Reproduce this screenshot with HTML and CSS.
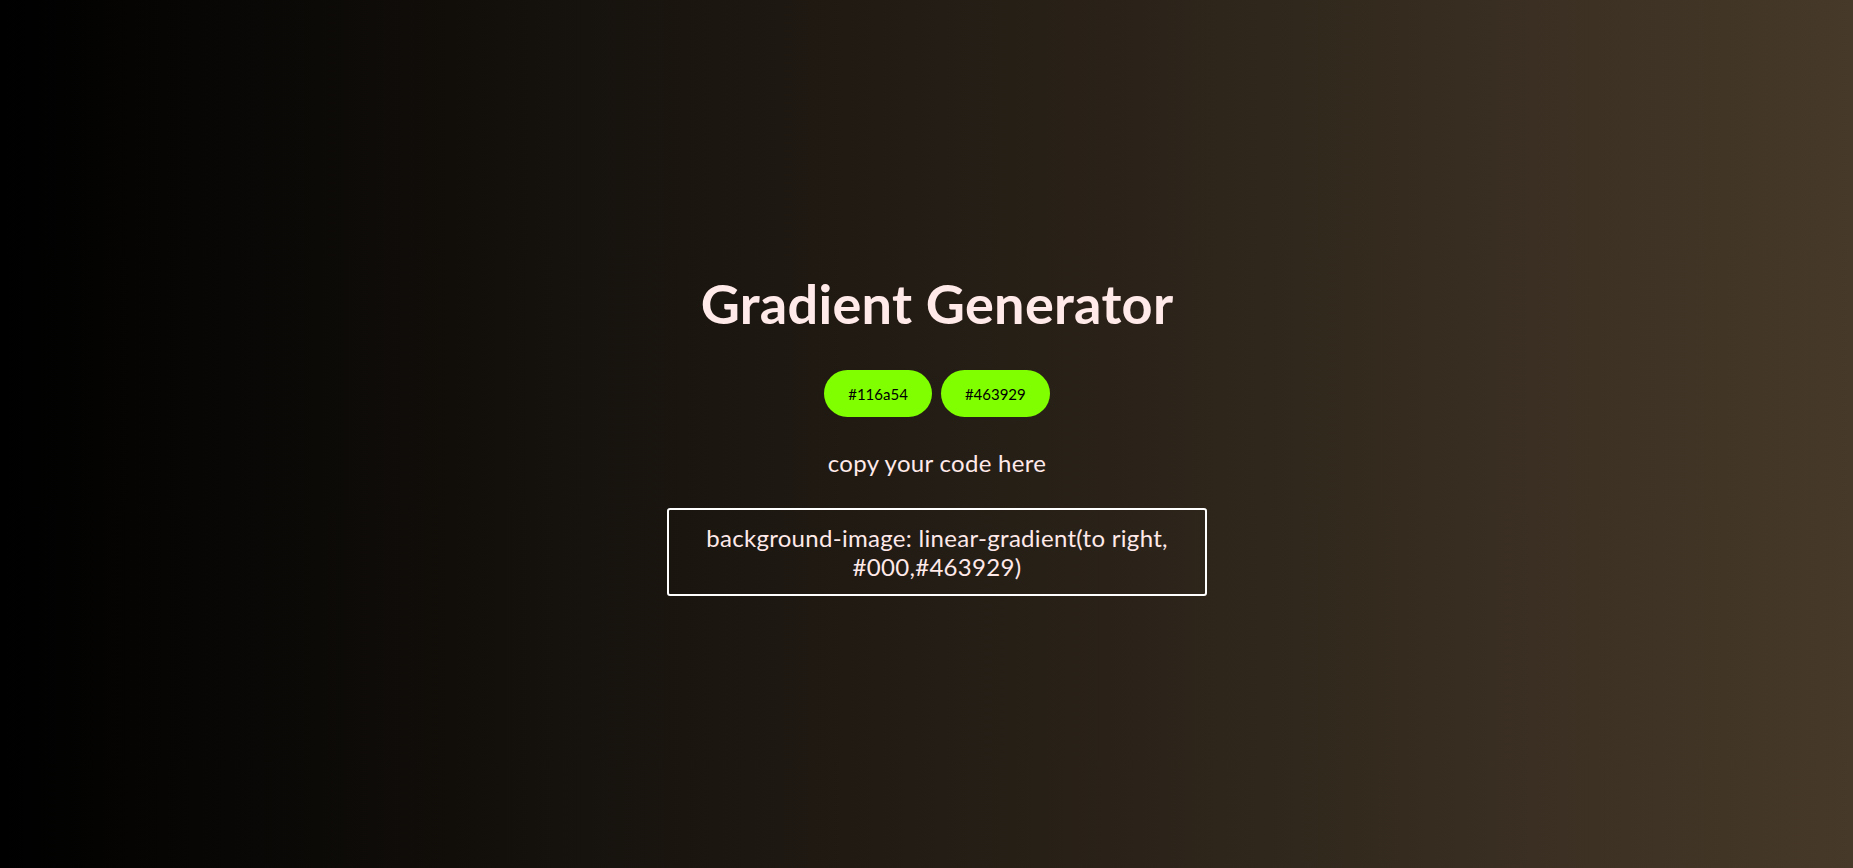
FILE: index.html
```html
<!DOCTYPE html>
<html lang="en">
<head>
<meta charset="UTF-8">
<title>Gradient Generator</title>
<link rel="stylesheet" href="styles.css">
</head>
<body>
<main class="app">
  <h1 class="title">Gradient Generator</h1>
  <div class="pickers">
    <button class="color-btn">#116a54</button>
    <button class="color-btn">#463929</button>
  </div>
  <p class="hint">copy your code here</p>
  <div class="code">background-image: linear-gradient(to right, #000,#463929)</div>
</main>
</body>
</html>
```

FILE: styles.css
```css
html, body {
  margin: 0;
  height: 100%;
}
body {
  background-image: linear-gradient(to right, #000, #463929);
  font-family: "Lato", "Liberation Sans", sans-serif;
  color: #ffe9e9;
}
.app {
  height: 100%;
  box-sizing: border-box;
  padding-left: 21px;
  display: flex;
  flex-direction: column;
  align-items: center;
  justify-content: center;
}
.title {
  margin: 0;
  font-size: 54px;
  font-weight: 700;
  line-height: 64px;
  letter-spacing: 0.3px;
}
.pickers {
  display: flex;
  gap: 9px;
  margin-top: 34px;
}
.color-btn {
  height: 47px;
  padding: 0 24px;
  border: none;
  border-radius: 24px;
  background: #80ff00;
  color: #000;
  font-family: inherit;
  font-size: 15px;
}
.hint {
  margin: 32px 0 0;
  font-size: 24px;
  line-height: 28px;
  letter-spacing: 0.3px;
}
.code {
  margin-top: 31px;
  width: 540px;
  box-sizing: border-box;
  padding: 13px 24px;
  border: 2px solid #fff;
  border-radius: 3px;
  text-align: center;
  font-size: 24px;
  line-height: 29px;
  letter-spacing: 0.3px;
}
```
